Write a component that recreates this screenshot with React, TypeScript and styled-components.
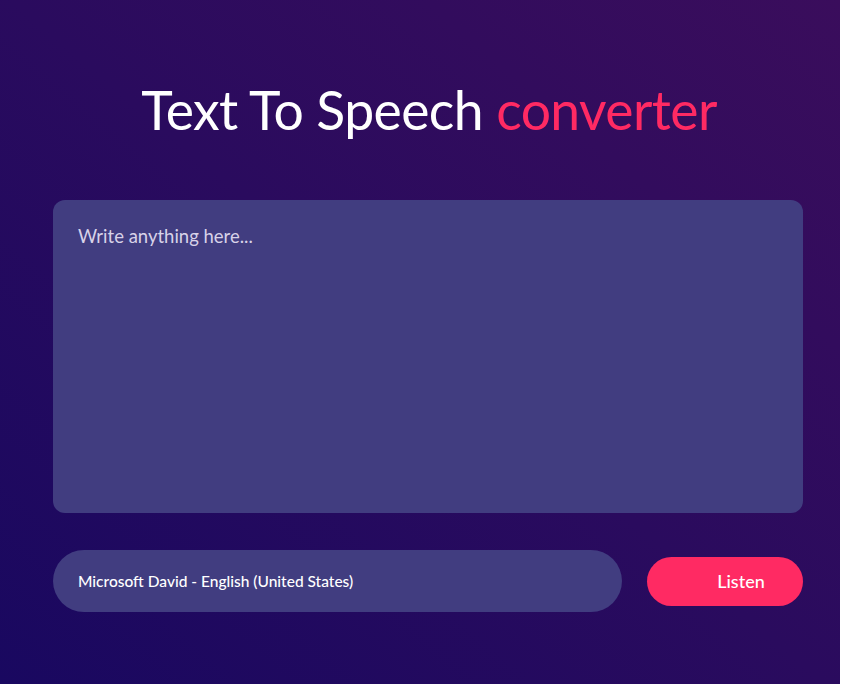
import React, { useState } from "react";
import styled, { createGlobalStyle } from "styled-components";

const GlobalStyle = createGlobalStyle`
  * {
    box-sizing: border-box;
  }
  body {
    margin: 0;
    background: #fff;
    font-family: "Lato", "Open Sans", sans-serif;
  }
`;

const voices = [
  "Microsoft David - English (United States)",
  "Microsoft Mark - English (United States)",
  "Microsoft Zira - English (United States)",
];

const App = () => {
  const [text, setText] = useState("");
  const [voice, setVoice] = useState(voices[0]);

  return (
    <Page>
      <GlobalStyle />
      <Title>
        Text To Speech <Accent>converter</Accent>
      </Title>
      <TextBox
        placeholder="Write anything here..."
        value={text}
        onChange={(e) => setText(e.target.value)}
      />
      <Controls>
        <VoiceSelect value={voice} onChange={(e) => setVoice(e.target.value)}>
          {voices.map((v) => (
            <option key={v} value={v}>
              {v}
            </option>
          ))}
        </VoiceSelect>
        <ListenButton>Listen</ListenButton>
      </Controls>
    </Page>
  );
};

const Page = styled.div`
  width: 840px;
  min-height: 684px;
  padding: 72px 37px 0 53px;
  display: flex;
  flex-direction: column;
  background: linear-gradient(40deg, #190860 0%, #2a0b5e 50%, #3a0d5c 100%);
`;

const Title = styled.h1`
  margin: 0 0 54px 2px;
  text-align: center;
  font-size: 53.5px;
  font-weight: 400;
  line-height: 74px;
  color: #fff;
  letter-spacing: -0.6px;
`;

const Accent = styled.span`
  color: #ff2a63;
`;

const TextBox = styled.textarea`
  width: 750px;
  height: 313px;
  padding: 25px 25px;
  border: none;
  border-radius: 12px;
  background: #413d80;
  color: #fff;
  font-family: inherit;
  font-size: 18.5px;
  resize: none;
  outline: none;

  &::placeholder {
    color: #d8d2e8;
  }
`;

const Controls = styled.div`
  width: 750px;
  margin-top: 37px;
  display: flex;
  align-items: center;
  justify-content: space-between;
`;

const VoiceSelect = styled.select`
  width: 569px;
  height: 62px;
  padding: 0 25px;
  border: none;
  border-radius: 31px;
  background: #413d80;
  color: #fff;
  font-family: inherit;
  font-size: 15.5px;
  font-weight: 500;
  appearance: none;
  outline: none;
`;

const ListenButton = styled.button`
  width: 156px;
  height: 49px;
  padding: 0 0 0 32px;
  border: none;
  border-radius: 25px;
  background: #ff2a63;
  color: #fff;
  font-family: inherit;
  font-size: 18px;
  font-weight: 500;
  cursor: pointer;
`;

export default App;
